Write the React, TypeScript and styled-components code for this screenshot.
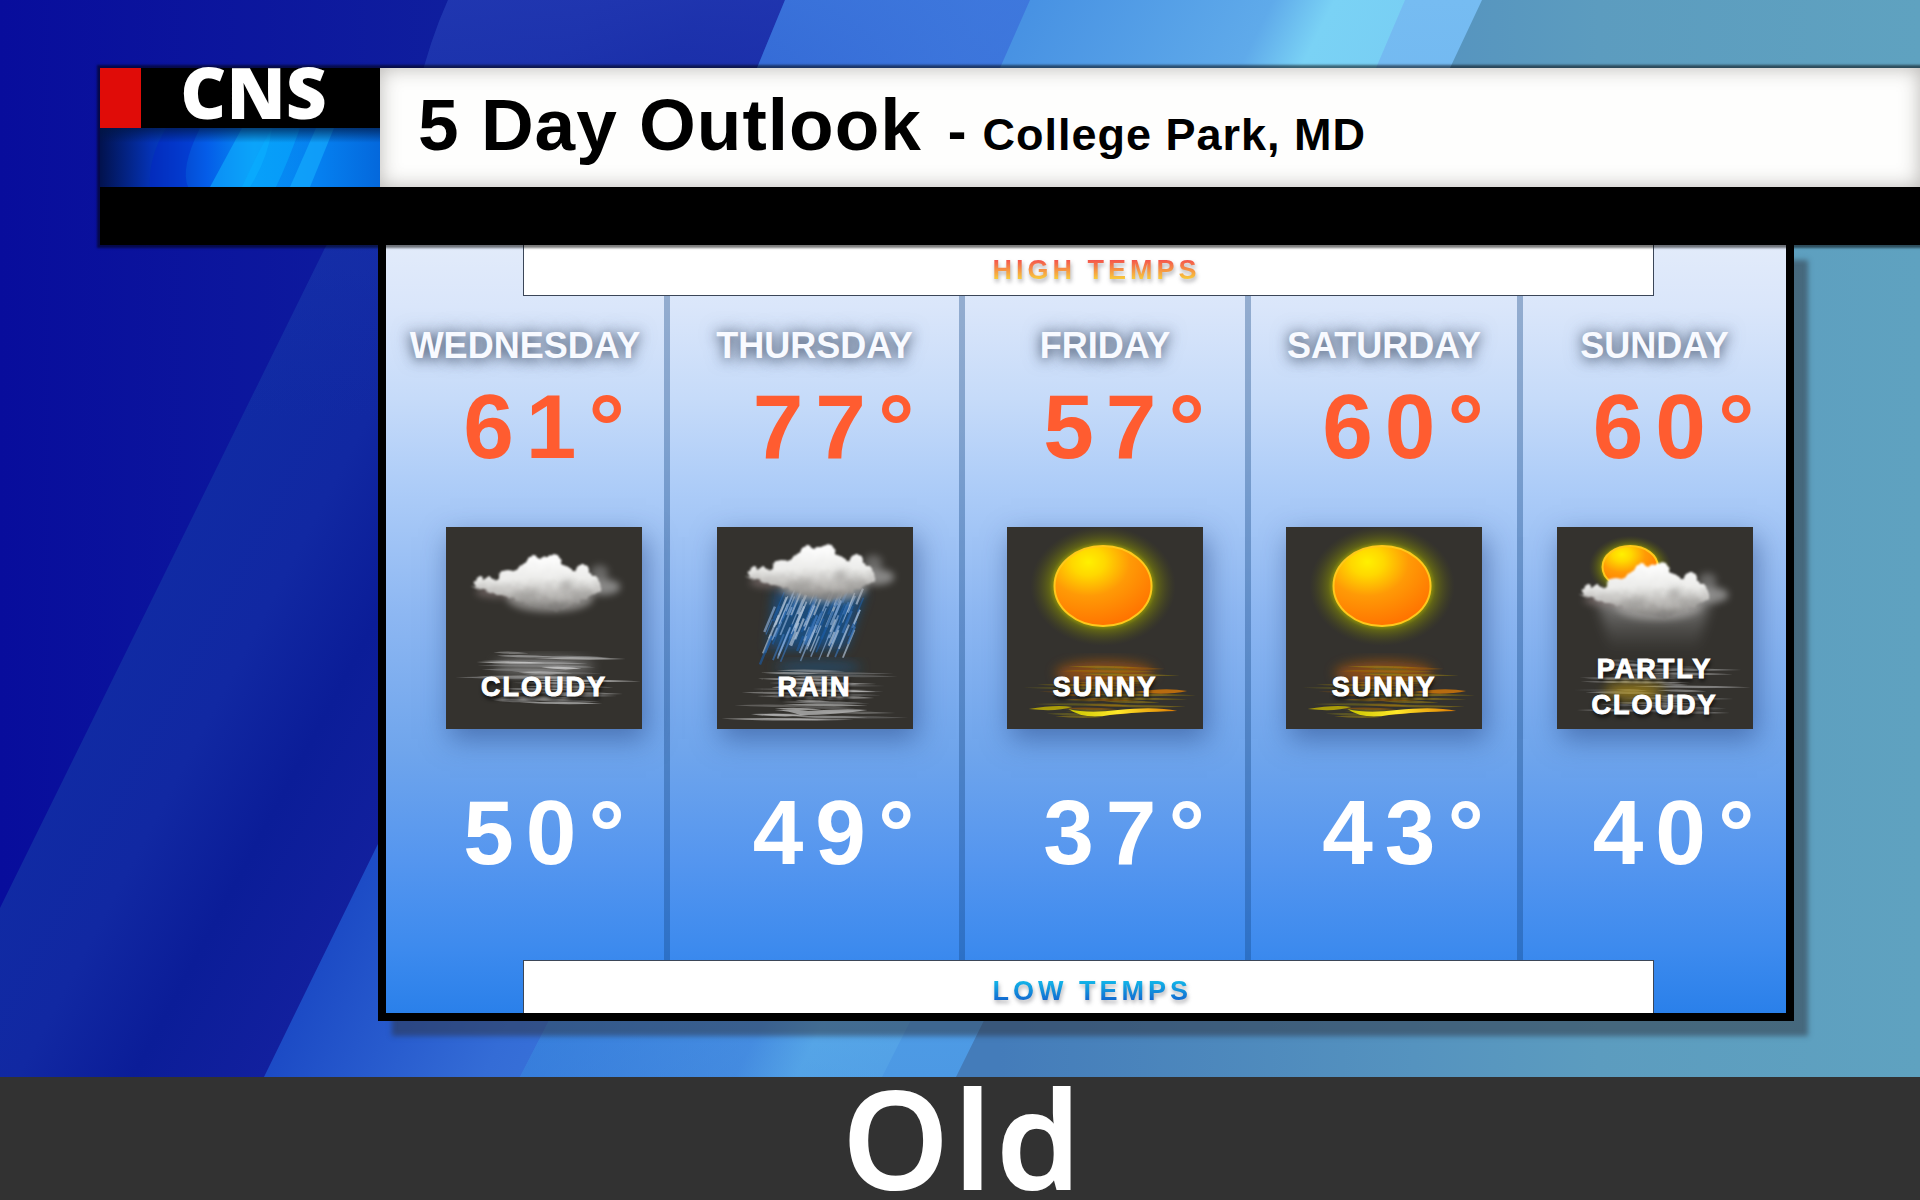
import React from "react";
import styled, { createGlobalStyle } from "styled-components";

const sans = `"Liberation Sans", Arial, Helvetica, sans-serif`;

const GlobalStyle = createGlobalStyle`
  *, *::before, *::after { box-sizing: border-box; }
  body { margin: 0; background: #323232; font-family: ${sans}; }
`;

const Page = styled.div`
  display: flex;
  flex-direction: column;
  min-height: 100vh;
`;

const Scene = styled.main`
  display: grid;
  flex: 1;
  overflow: hidden;
`;

const Backdrop = styled.svg`
  grid-area: 1 / 1;
  width: 100%;
  height: 100%;
  min-height: 0;
`;

const Board = styled.div`
  grid-area: 1 / 1;
  display: flex;
  flex-direction: column;
  padding: 68px 0 56px 100px;
`;

const Header = styled.header`
  position: relative;
  z-index: 1;
  display: grid;
  grid-template-columns: 280px 1fr;
  background: #000;
  padding-bottom: 58px;
  box-shadow: 0 0 2px 3px rgba(0, 0, 0, 0.52);
`;

const Brand = styled.div`
  display: grid;
  grid-template-columns: 41px 1fr;
  grid-template-rows: 60px 59px;
`;

const RedBlock = styled.div`
  background: #e00c08;
`;

const BrandName = styled.div`
  padding: 0 14px 12px 0;
  color: #fff;
  font: 800 71px/48px "Open Sans", "Noto Sans", sans-serif;
  text-align: center;
`;

const BrandArt = styled.svg`
  grid-column: 1 / -1;
  width: 100%;
  height: 100%;
`;

const TitleBar = styled.div`
  display: flex;
  align-items: baseline;
  padding: 17px 0 0 38px;
  background: #fefefd;
  box-shadow: inset 0 0 20px rgba(70, 66, 60, 0.38);
  color: #000;
  font-weight: 700;
  white-space: nowrap;
`;

const Title = styled.h1`
  margin: 0;
  font-size: 73px;
  line-height: 80px;
  letter-spacing: 1px;
`;

const Dash = styled.span`
  margin: 0 16px 0 26px;
  font-size: 56px;
`;

const Place = styled.span`
  font-size: 45px;
  letter-spacing: 1px;
`;

const Panel = styled.section`
  display: flex;
  flex: 1;
  flex-direction: column;
  margin: 0 126px 0 278px;
  border: 8px solid #000;
  border-top: 0;
  background: linear-gradient(
    #e2ebfa 0%, #dae6fa 8%, #c6dbf9 20%, #aecdf8 31%, #8db7f2 48%,
    #6fa5ec 66%, #5596ef 80%, #3c8aee 92%, #2a80ea 100%
  );
  box-shadow: 14px 15px 5px rgba(45, 50, 60, 0.5);
`;

const Strip = styled.div<{ $edge: "top" | "bottom" }>`
  display: flex;
  justify-content: center;
  margin: 0 132px 0 137px;
  padding: ${(p) => (p.$edge === "top" ? "9px 0 9px 16px" : "14px 0 6px 16px")};
  border: 1px solid #3b4658;
  border-${(p) => p.$edge}: 0;
  background: #fff;
`;

const StripText = styled.h2<{ $from: string; $to: string }>`
  width: 208px;
  margin: 0;
  font-size: 27px;
  line-height: 32px;
  letter-spacing: 4px;
  white-space: nowrap;
  color: transparent;
  background: linear-gradient(${(p) => p.$from} 20%, ${(p) => p.$to} 80%);
  background-clip: text;
  filter: drop-shadow(1px 3px 2px rgba(60, 60, 70, 0.4));
`;

const Days = styled.div`
  display: grid;
  flex: 1;
  grid-template-columns: 284fr 295fr 286fr 272fr 263fr;
`;

const Day = styled.article`
  display: flex;
  flex-direction: column;
  align-items: center;
  padding: 30px 0 78px;
  border-right: 6px solid rgba(20, 70, 130, 0.36);

  &:last-child { border-right: 0; }
`;

const DayName = styled.h3`
  margin: 0 0 13px;
  color: #f8faff;
  font-size: 36px;
  line-height: 40px;
  text-shadow: 0 2px 12px rgba(60, 75, 100, 0.8), 0 0 18px rgba(80, 95, 120, 0.6);
`;

const Temp = styled.div<{ $tone: string }>`
  padding-left: 50px;
  color: ${(p) => p.$tone};
  font-size: 91px;
  font-weight: 700;
  line-height: 96px;
  letter-spacing: 12px;
  white-space: nowrap;
`;

const Tile = styled.figure<{ $inset: number }>`
  display: grid;
  width: 196px;
  height: 202px;
  margin: 52px 0 56px ${(p) => p.$inset}px;
  background: #34322e;
  box-shadow: 4px 10px 26px rgba(30, 60, 120, 0.5);
`;

const Art = styled.svg`
  grid-area: 1 / 1;
  width: 100%;
  height: 100%;
`;

const Condition = styled.figcaption`
  grid-area: 1 / 1;
  align-self: end;
  display: flex;
  align-items: center;
  justify-content: center;
  height: 84px;
  padding: 0 24px;
  color: #fff;
  font-size: 27px;
  font-weight: 700;
  line-height: 36px;
  letter-spacing: 2px;
  text-align: center;
  -webkit-text-stroke: 1px #fff;
  text-shadow: 1px 3px 4px rgba(0, 0, 0, 0.8);
`;

const Footer = styled.footer`
  padding: 0 0 3px 8px;
  background: #323232;
  color: #fff;
  font: 600 135px/120px "Open Sans", "Noto Sans", sans-serif;
  letter-spacing: 5px;
  text-align: center;
  -webkit-text-stroke: 2px #fff;
`;

type Sky = "cloudy" | "rain" | "sunny" | "partly";

/* Small repeatable generator so the streaks always fall in the same places. */
const noise = (n: number) => {
  const v = Math.sin(n * 127.1 + 11.7) * 43758.5453;
  return v - Math.floor(v);
};

const puffs: [number, number, number][] = [
  [34, 56, 6], [45, 57, 7], [62, 53, 10], [78, 54, 13], [89, 39, 10], [84, 48, 13],
  [108, 38, 10], [100, 46, 16], [116, 50, 13], [128, 54, 11], [138, 46, 8],
  [141, 56, 12], [92, 62, 17], [110, 66, 17], [126, 65, 13], [72, 62, 11],
];

const Cloud = ({ id }: { id: string }) => (
  <g>
    <defs>
      <linearGradient id={`${id}-fill`} x1="0" y1="28" x2="0" y2="86" gradientUnits="userSpaceOnUse">
        <stop offset="0" stopColor="#fff" />
        <stop offset="0.4" stopColor="#ececea" />
        <stop offset="0.72" stopColor="#b3b1ae" />
        <stop offset="1" stopColor="#6b6967" stopOpacity="0.2" />
      </linearGradient>
      <filter id={`${id}-rough`} x="-10%" y="-10%" width="120%" height="125%">
        <feTurbulence type="fractalNoise" baseFrequency="0.12" numOctaves={3} seed={4} result="n" />
        <feDisplacementMap in="SourceGraphic" in2="n" scale={6} xChannelSelector="R" yChannelSelector="G" result="d" />
        <feGaussianBlur in="d" stdDeviation="0.9" />
      </filter>
      <filter id={`${id}-soft`} x="-30%" y="-30%" width="160%" height="160%">
        <feGaussianBlur stdDeviation="3.5" />
      </filter>
    </defs>
    <g filter={`url(#${id}-soft)`}>
      <ellipse cx="105" cy="71" rx="44" ry="14" fill="#aaa8a5" opacity="0.7" />
      <ellipse cx="158" cy="60" rx="18" ry="8" fill="#aaa" opacity="0.7" />
      <ellipse cx="155" cy="46" rx="9" ry="8" fill="#999" opacity="0.5" />
      <ellipse cx="52" cy="65" rx="22" ry="6" fill="#988" opacity="0.5" />
    </g>
    <g filter={`url(#${id}-rough)`} fill={`url(#${id}-fill)`}>
      <path d="M25 60C40 54 52 54 66 50L140 50C150 52 160 58 156 64C140 72 128 78 112 83C96 82 76 76 62 70C48 66 34 64 25 60Z" />
      {puffs.map(([x, y, r]) => (
        <circle key={`${x}-${y}`} cx={x} cy={y} r={r} />
      ))}
    </g>
    <g filter={`url(#${id}-soft)`} fill="#6f6e6c" opacity="0.3">
      <ellipse cx="82" cy="68" rx="13" ry="4" />
      <ellipse cx="122" cy="58" rx="7" ry="6" />
      <ellipse cx="138" cy="67" rx="13" ry="4" />
    </g>
  </g>
);

const Water = ({ seed, colors, top }: { seed: number; colors: string[]; top: number }) => (
  <g>
    {Array.from({ length: 34 }, (_, i) => {
      const y = top + i * 1.5 + noise(seed + i) * 3;
      const half = 14 + noise(seed + i * 3) * 46;
      const cx = 99 + (noise(seed + i * 7) - 0.5) * 80;
      return (
        <path
          key={i}
          d={`M${cx - half} ${y}Q${cx} ${y - 2} ${cx + half} ${y + 1}Q${cx} ${y + 3} ${cx - half} ${y}`}
          fill={colors[i % colors.length]}
          opacity={0.3 + noise(seed + i * 5) * 0.45}
        />
      );
    })}
  </g>
);

const Sun = ({ id, cx, cy, rx, ry }: { id: string; cx: number; cy: number; rx: number; ry: number }) => (
  <g>
    <defs>
      <radialGradient id={`${id}-sun`} cx="0.35" cy="0.2" r="0.85">
        <stop offset="0" stopColor="#fff000" />
        <stop offset="0.2" stopColor="#ffd800" />
        <stop offset="0.5" stopColor="#ff9a06" />
        <stop offset="1" stopColor="#ff7000" />
      </radialGradient>
      <radialGradient id={`${id}-halo`}>
        <stop offset="0.6" stopColor="#d8d800" stopOpacity="0.95" />
        <stop offset="0.74" stopColor="#8c9400" stopOpacity="0.5" />
        <stop offset="1" stopColor="#555a10" stopOpacity="0" />
      </radialGradient>
    </defs>
    <ellipse cx={cx} cy={cy} rx={rx * 1.5} ry={ry * 1.5} fill={`url(#${id}-halo)`} />
    <ellipse cx={cx} cy={cy} rx={rx} ry={ry} fill={`url(#${id}-sun)`} stroke="#ffc81c" strokeWidth="2" />
  </g>
);

const SkyArt = ({ sky, id }: { sky: Sky; id: string }) => (
  <Art viewBox="0 0 198 202" preserveAspectRatio="none" aria-hidden="true">
    <defs>
      <filter id={`${id}-blur`} x="-30%" y="-30%" width="160%" height="160%">
        <feGaussianBlur stdDeviation="6" />
      </filter>
      <filter id={`${id}-fine`} x="-10%" y="-10%" width="120%" height="120%">
        <feGaussianBlur stdDeviation="0.7" />
      </filter>
      <linearGradient id={`${id}-glint`}>
        <stop offset="0" stopColor="#c8c400" />
        <stop offset="0.45" stopColor="#ffe92a" />
        <stop offset="1" stopColor="#e07a00" />
      </linearGradient>
      <linearGradient id={`${id}-ray`} x1="0" y1="0" x2="0" y2="1">
        <stop offset="0" stopColor="#aaa" stopOpacity="0.75" />
        <stop offset="1" stopColor="#777" stopOpacity="0" />
      </linearGradient>
    </defs>
    {sky === "cloudy" && (
      <g>
        <ellipse cx="99" cy="139" rx="50" ry="9" fill="#999" opacity="0.6" filter={`url(#${id}-blur)`} />
        <g filter={`url(#${id}-fine)`}>
          <Water seed={3} top={125} colors={["#ddd", "#888", "#aaa"]} />
        </g>
        <Cloud id={id} />
      </g>
    )}
    {sky === "rain" && (
      <g>
        <path d="M58 64H150L130 122H52Z" fill="#0f5dac" opacity="0.6" filter={`url(#${id}-blur)`} />
        <g filter={`url(#${id}-fine)`}>
          {Array.from({ length: 110 }, (_, i) => {
            const t = noise(i * 3 + 1);
            const x = 62 + noise(i + 2) * 90 - t * 14;
            const y = 60 + t * 50;
            const len = 12 + noise(i * 5) * 18;
            return (
              <line
                key={i}
                x1={x}
                y1={y}
                x2={x - len * 0.42}
                y2={y + len}
                stroke={["#8fb0d8", "#3a74b8", "#b8cade", "#1c5aa0"][i % 4]}
                strokeWidth={1 + noise(i) * 1.6}
                opacity={0.65}
              />
            );
          })}
        </g>
        <ellipse cx="102" cy="140" rx="44" ry="6" fill="#1f5a8c" opacity="0.6" filter={`url(#${id}-blur)`} />
        <g filter={`url(#${id}-fine)`}>
          <Water seed={21} top={142} colors={["#bbb", "#777", "#ddd"]} />
          <path d="M58 183Q80 182 92 184Q130 181 152 183Q120 188 84 188Q74 184 58 183" fill="#bbb" opacity="0.75" />
        </g>
        <g transform="translate(3 -10)">
          <Cloud id={id} />
        </g>
      </g>
    )}
    {sky === "sunny" && (
      <g>
        <ellipse cx="99" cy="146" rx="50" ry="12" fill="#b65a08" opacity="0.65" filter={`url(#${id}-blur)`} />
        <g filter={`url(#${id}-fine)`}>
          <Water seed={41} top={138} colors={["#a58a10", "#b06408", "#6d6620"]} />
        </g>
        <Sun id={id} cx={97} cy={59} rx={49} ry={40} />
        <path d="M22 182Q50 177 66 180Q50 185 22 182" fill="#c9b800" opacity="0.8" />
        <path d="M62 182Q82 187 112 183Q150 179 172 184Q130 185 104 188Q78 193 62 182" fill={`url(#${id}-glint)`} />
        <path d="M130 165Q160 160 182 164Q160 169 130 165" fill="#d87908" opacity="0.8" />
      </g>
    )}
    {sky === "partly" && (
      <g>
        <path d="M40 68H156L142 124H54Z" fill={`url(#${id}-ray)`} filter={`url(#${id}-blur)`} />
        <g filter={`url(#${id}-fine)`}>
          <Water seed={61} top={133} colors={["#999", "#666", "#bbb"]} />
        </g>
        <ellipse cx="78" cy="164" rx="30" ry="8" fill="#c09a10" opacity="0.65" filter={`url(#${id}-blur)`} />
        <Sun id={id} cx={74} cy={40} rx={28} ry={21} />
        <g transform="translate(-3 8)">
          <Cloud id={id} />
        </g>
      </g>
    )}
  </Art>
);

type Forecast = {
  day: string;
  high: number;
  low: number;
  sky: Sky;
  text: string;
  inset: number;
};

const forecast: Forecast[] = [
  { day: "WEDNESDAY", high: 61, low: 50, sky: "cloudy", text: "CLOUDY", inset: 38 },
  { day: "THURSDAY", high: 77, low: 49, sky: "rain", text: "RAIN", inset: 0 },
  { day: "FRIDAY", high: 57, low: 37, sky: "sunny", text: "SUNNY", inset: 0 },
  { day: "SATURDAY", high: 60, low: 43, sky: "sunny", text: "SUNNY", inset: 0 },
  { day: "SUNDAY", high: 60, low: 40, sky: "partly", text: "PARTLY CLOUDY", inset: 0 },
];

const SceneBackdrop = () => (
  <Backdrop viewBox="0 0 1920 1077" preserveAspectRatio="none" aria-hidden="true">
    <defs>
      <linearGradient id="deep" x1="0" x2="500" gradientUnits="userSpaceOnUse">
        <stop offset="0" stopColor="#080d9c" />
        <stop offset="1" stopColor="#10209e" />
      </linearGradient>
      <linearGradient id="navy" x1="160" y1="500" x2="480" y2="670" gradientUnits="userSpaceOnUse">
        <stop offset="0" stopColor="#102ba4" />
        <stop offset="0.4" stopColor="#1128a2" />
        <stop offset="0.68" stopColor="#0b1d98" />
        <stop offset="1" stopColor="#12209e" />
      </linearGradient>
      <linearGradient id="navyTop" x1="0" y1="0" x2="0" y2="420" gradientUnits="userSpaceOnUse">
        <stop offset="0" stopColor="#2238b2" stopOpacity="0.85" />
        <stop offset="1" stopColor="#1a30aa" stopOpacity="0" />
      </linearGradient>
      <linearGradient id="royal" x1="330" y1="900" x2="760" y2="1100" gradientUnits="userSpaceOnUse">
        <stop offset="0" stopColor="#1a48c4" />
        <stop offset="0.45" stopColor="#346cd6" />
        <stop offset="1" stopColor="#4680e0" />
      </linearGradient>
      <linearGradient id="royalTop" x1="0" y1="0" x2="0" y2="500" gradientUnits="userSpaceOnUse">
        <stop offset="0" stopColor="#407ade" stopOpacity="0.8" />
        <stop offset="1" stopColor="#3a70dc" stopOpacity="0" />
      </linearGradient>
      <linearGradient id="bright" x1="600" y1="810" x2="930" y2="975" gradientUnits="userSpaceOnUse">
        <stop offset="0" stopColor="#458fe2" />
        <stop offset="0.65" stopColor="#5faaea" />
        <stop offset="0.8" stopColor="#7ad2f5" />
        <stop offset="1" stopColor="#78cff4" />
      </linearGradient>
      <linearGradient id="teal" x1="1000" x2="1920" gradientUnits="userSpaceOnUse">
        <stop offset="0" stopColor="#447cba" />
        <stop offset="0.45" stopColor="#5593bf" />
        <stop offset="0.65" stopColor="#5c9cbf" />
        <stop offset="1" stopColor="#5fa2c0" />
      </linearGradient>
      <linearGradient id="edge" x1="0" y1="0" x2="0" y2="1">
        <stop offset="0" stopColor="#76bcf2" />
        <stop offset="1" stopColor="#4c99e4" />
      </linearGradient>
      <linearGradient id="dim" x1="0" y1="0" x2="0" y2="1">
        <stop offset="0.4" stopColor="#1a5bd0" stopOpacity="0" />
        <stop offset="1" stopColor="#1a5bd0" stopOpacity="0.4" />
      </linearGradient>
    </defs>
    <rect width="1920" height="1077" fill="url(#deep)" />
    <path d="M448 0Q430 40 418 90L325 248L0 908V1077H1920V0Z" fill="url(#navy)" />
    <path d="M448 0Q430 40 418 90L325 248L0 908V1077H1920V0Z" fill="url(#navyTop)" />
    <path d="M785 0L757 68L640 320L375 850L264 1077H1920V0Z" fill="url(#royal)" />
    <path d="M785 0L757 68L640 320L375 850L264 1077H1920V0Z" fill="url(#royalTop)" />
    <path d="M1030 0L1000 68L960 220L520 1077H1920V0Z" fill="url(#bright)" />
    <path d="M1030 0L1000 68L960 220L520 1077H1920V0Z" fill="url(#dim)" />
    <path d="M1405 0L1376 68L1290 270L882 1077H1920V0Z" fill="url(#edge)" />
    <path d="M1482 0L1450 68L1360 260L956 1077H1920V0Z" fill="url(#teal)" />
  </Backdrop>
);

export default function App() {
  return (
    <Page>
      <GlobalStyle />
      <Scene>
        <SceneBackdrop />
        <Board>
          <Header>
            <Brand>
              <RedBlock />
              <BrandName>CNS</BrandName>
              <BrandArt viewBox="0 0 280 59" preserveAspectRatio="none" aria-hidden="true">
                <defs>
                  <linearGradient id="brand">
                    <stop offset="0" stopColor="#02124e" />
                    <stop offset="0.18" stopColor="#0432b4" />
                    <stop offset="0.38" stopColor="#045ce8" />
                    <stop offset="0.55" stopColor="#0690f4" />
                    <stop offset="0.78" stopColor="#0580f0" />
                    <stop offset="1" stopColor="#0468dc" />
                  </linearGradient>
                  <linearGradient id="brandShade" x1="0" y1="0" x2="0" y2="1">
                    <stop offset="0" stopColor="#001640" stopOpacity="0.7" />
                    <stop offset="0.25" stopColor="#001640" stopOpacity="0" />
                  </linearGradient>
                </defs>
                <rect width="280" height="59" fill="url(#brand)" />
                <path d="M66 0Q48 30 50 59H88Q80 40 100 0Z" fill="#0324c8" opacity="0.4" />
                <path d="M142 0L110 59H150Q168 30 172 0Z" fill="#10b4ff" opacity="0.55" />
                <path d="M142 59Q160 20 172 0H200Q188 34 176 59Z" fill="#08b0ff" opacity="0.5" />
                <path d="M216 0L190 59H210L234 0Z" fill="#16b0ff" opacity="0.6" />
                <rect width="280" height="59" fill="url(#brandShade)" />
              </BrandArt>
            </Brand>
            <TitleBar>
              <Title>5 Day Outlook</Title>
              <Dash>-</Dash>
              <Place>College Park, MD</Place>
            </TitleBar>
          </Header>
          <Panel>
            <Strip $edge="top">
              <StripText $from="#f4574c" $to="#f8cf3a">HIGH TEMPS</StripText>
            </Strip>
            <Days>
              {forecast.map((f, i) => (
                <Day key={f.day}>
                  <DayName>{f.day}</DayName>
                  <Temp $tone="#ff5c30">{f.high}°</Temp>
                  <Tile $inset={f.inset}>
                    <SkyArt sky={f.sky} id={`sky${i}`} />
                    <Condition>{f.text}</Condition>
                  </Tile>
                  <Temp $tone="#fff">{f.low}°</Temp>
                </Day>
              ))}
            </Days>
            <Strip $edge="bottom">
              <StripText $from="#12b4e8" $to="#1268d0">LOW TEMPS</StripText>
            </Strip>
          </Panel>
        </Board>
      </Scene>
      <Footer>Old</Footer>
    </Page>
  );
}
